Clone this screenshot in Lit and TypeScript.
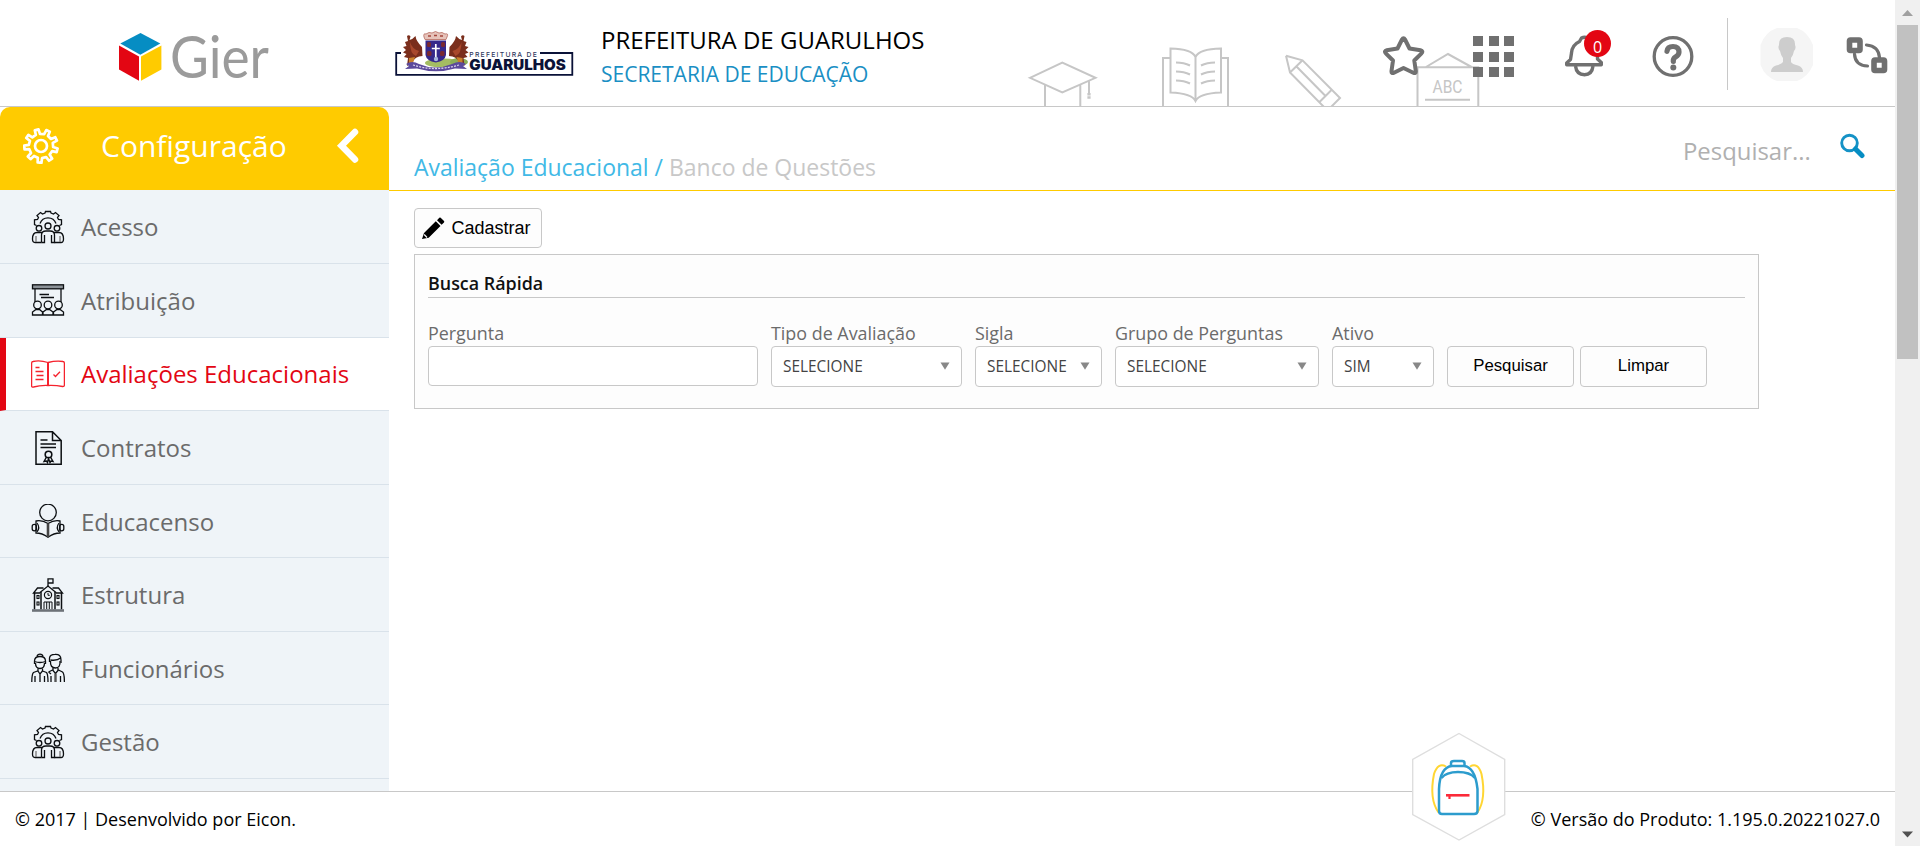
import { LitElement, html, css, svg } from "lit";
import { customElement, property } from "lit/decorators.js";

/* ---------- Menu icons, drawn on a 34px square ---------- */

const team = svg`
  <path d="M5.500 15.500 L3.500 14.500 L3.500 9.800 L6.500 9.500 L7.500 7.500 L6 5.500 L9.500 2.500 L11.500 4 L14 3 L14.500 1.500 H19.500 L20 3 L22.500 4 L24.500 2.500 L28 5.500 L26.500 7.500 L27.500 9.500 L30.500 9.800 V14.500 L28.500 15.500"/>
  <path d="M9 13.500 A8.500 8.500 0 0 1 25 13.500"/>
  <circle cx="17" cy="16" r="3"/><circle cx="8" cy="18.300" r="2.800"/><circle cx="26" cy="18.300" r="2.800"/>
  <path d="M10.500 32.500 H4 Q1.500 32.500 1.500 29 Q1.500 22.500 6 22.500 H11"/>
  <path d="M23.500 32.500 H30 Q32.500 32.500 32.500 29 Q32.500 22.500 28 22.500 H23"/>
  <path d="M10.500 32.500 V25 Q10.500 21 15 21 H19 Q23.500 21 23.500 25 V32.500 H20.500 V25 M10.500 32.500 H13.500 V25"/>
  <path d="M5 26 V32 M29 26 V32" stroke="#777"/>`;

const board = svg`
  <rect x="1.500" y="1.800" width="31" height="4" fill="#8c9298"/>
  <path d="M4 6 V19 M30 6 V19 M8.500 11.500 H18 M10 14.500 H23"/>
  <circle cx="6.500" cy="22" r="3.800"/><circle cx="17" cy="22" r="3.800"/><circle cx="27.500" cy="22" r="3.800"/>
  <path d="M1.500 32 V29 L5 26.500 H8.500 L11.500 29 V32 Z M12 32 V29 L15.500 26.500 H18.500 L22 29 V32 Z M22.500 32 V29 L26 26.500 H29 L32.500 29 V32 Z"/>`;

const bookCheck = svg`
  <path d="M17 5.500 Q9 3 2 4.500 Q.6 4.600 .6 6.500 V29 Q.6 30.300 2.500 30 Q9 28.200 17 28.500 Q25 28.200 31.500 29.500 Q33.400 29.700 33.400 28 V6.500 Q33.400 4.600 32 4.500 Q25 3.500 17 5.500 Z"/>
  <path d="M17 5.500 V28.500" stroke-width="2"/>
  <path d="M4.500 10.500 H8.500 M4.500 14.500 H12.500 M5.500 18.500 H12.500 M4.500 22.500 H12.500"/>
  <path d="M22.500 17.500 L24.500 19.500 L29 14.800"/>`;

const contract = svg`
  <path d="M5 .8 H21.500 L30.200 9.500 V33.200 H5 Z M21.500 .8 V9.500 H30.200" stroke-width="1.500"/>
  <path d="M9.500 9 H16.500 M9.500 13 H25 M9.500 16.500 H25"/>
  <circle cx="17.500" cy="23.500" r="3.300" stroke-width="1.600"/>
  <path d="M15.500 26 L13 30.500 L15.500 30 L16.500 31.500 L17.500 27.500 L19 31.500 L20 30 L22 30.500 L19.500 26" stroke-width="1.400"/>`;

const reader = svg`
  <circle cx="17" cy="8.500" r="8.300"/>
  <path d="M17 19.500 Q11 15.800 5 17 V29 Q11 29 17 33.300 Q23 29 29 29 V17 Q23 15.800 17 19.500 Z"/>
  <path d="M17 19.500 V33" stroke-width="2.600" stroke="#444"/>
  <path d="M6 19 Q9.500 23.500 6 28 M28 19 Q24.500 23.500 28 28" stroke-width="1.200"/>
  <rect x="1.200" y="20.300" width="4.200" height="6.600" rx="2.100"/><rect x="28.600" y="20.300" width="4.200" height="6.600" rx="2.100"/>`;

const school = svg`
  <path d="M17 8 V.8 H22 V5 H17.500" />
  <path d="M9 14.500 L17 8 L25 14.500 M12.500 10 H6.500 L2.500 15 H9 M21.500 10 H27.500 L31.500 15 H25"/>
  <path d="M3.500 15 V31.500 M30.500 15 V31.500 M10 14 V31.500 M24 14 V31.500" stroke-width="1.500"/>
  <circle cx="17" cy="17" r="3.600" stroke-width="1.200"/><path d="M17 15 V17.300 H18.800" stroke-width="1"/>
  <g stroke-width="1.100"><rect x="6" y="17.500" width="2" height="3"/><rect x="6" y="24" width="2" height="3"/>
  <rect x="26" y="17.500" width="2" height="3"/><rect x="26" y="24" width="2" height="3"/></g>
  <path d="M13 31.500 V24 H21 V31.500 M15.700 24 V31 M18.300 24 V31" stroke-width="1"/>
  <path d="M1 32.500 H33" stroke="#6d7278" stroke-width="2.600"/>`;

const couple = svg`
  <path d="M6 5.300 Q6.500 3.200 9 3.200 Q11.500 3.200 12 5.300"/>
  <path d="M3.500 13 V10 Q3.500 5.500 9 5.500 Q14.500 5.500 14.500 10 V13 M3.500 10.500 Q9 12.500 14.500 10.500"/>
  <path d="M4.500 12 Q4.500 17.500 9 17.500 Q13.500 17.500 13.500 12"/>
  <path d="M7 17.500 V20 L9 23 L11.500 20 V17.500 M6.500 20 L2.500 21.500 Q.8 23 .8 31 M11.500 20 L15.500 21.500 Q17 23 17 31 M4 25 V31 M13.500 25 V31 M9 23 V31"/>
  <path d="M18.500 11 V7 Q19 3.400 24 3.400 Q30 3 30 9 V12 M19.500 9 Q26 10 29.500 7"/>
  <path d="M19.500 10 Q19 17 24.500 17 Q29.500 17 29 10"/>
  <path d="M22 17 V19.500 L24.500 22.500 L27 19.500 V17 M21.500 19 L17.500 21 M27.500 19 L31.500 21 Q33.400 22.500 33.400 31 M20 25 V31 M29.500 25 V31 M17.500 21 L20 23"/>
  <path d="M24.500 22.500 V31" stroke-width="2.400" stroke="#555"/>`;

interface MenuEntry {
  label: string;
  icon: unknown;
  active?: boolean;
}

const MENU: MenuEntry[] = [
  { label: "Acesso", icon: team },
  { label: "Atribuição", icon: board },
  { label: "Avaliações Educacionais", icon: bookCheck, active: true },
  { label: "Contratos", icon: contract },
  { label: "Educacenso", icon: reader },
  { label: "Estrutura", icon: school },
  { label: "Funcionários", icon: couple },
  { label: "Gestão", icon: team },
];

/* ---------- Header ---------- */

@customElement("gier-logo")
class GierLogo extends LitElement {
  static styles = css`:host, svg { display: block; } svg { overflow: visible; margin-bottom: -20px; }`;
  render() {
    return html`<svg width="156" height="72" viewBox="0 0 156 72">
      <path d="M21.500 1 L41.300 11.500 L21.300 22.800 L1.300 11.500 Z" fill="#068dc3"/>
      <path d="M0 13.500 L20 24.500 V48.800 L0 37.500 Z" fill="#e30613"/>
      <path d="M22 24.500 L42.400 13.500 V37.500 L22 48.800 Z" fill="#ffcb00"/>
      <text x="51" y="45.800" textLength="99" lengthAdjust="spacingAndGlyphs" font-family="Lato, sans-serif" font-size="57.500" font-weight="400" fill="#9b9b9b">Gier</text>
    </svg>`;
  }
}

@customElement("city-logo")
class CityLogo extends LitElement {
  static styles = css`:host, svg { display: block; }`;
  render() {
    const eagle = svg`
      <path d="M12 6 Q14 4.500 15.500 6.500 L14.500 10 Q18 9 20.500 6 Q21 11 27 17 L27.500 26 Q20 26 17 33 L12 36 L13 28 L9 27 L11.500 24 L8 22.500 L11 20 L8 17 L11.500 16 L10 12 L13 11 Z" fill="#7a2e1c"/>
      <path d="M15 12 Q17 19 24 21 L21 26 Q15 24 15 12 Z" fill="#a8482c"/>
      <path d="M14 28 L20 27 L18 33 L14 34 Z" fill="#c9822c"/>`;
    return html`<svg width="180" height="50" viewBox="0 0 180 50">
      <path d="M6 23 H1.200 V44.800 H177.300 V23 H145" fill="none" stroke="#0a1238" stroke-width="1.800"/>
      <ellipse cx="48" cy="33" rx="18" ry="4.500" fill="#a4bd62"/><ellipse cx="64" cy="32" rx="9" ry="4" fill="#8caf57"/>
      ${eagle}
      <g transform="translate(81.500 0) scale(-1 1)">${eagle}</g>
      <path d="M29 7 Q28 3 31 4 L34 2.500 L37 3 L40.500 1.500 L44 3 L47 2.500 L50 4 Q54 3 52 7 L51 9.500 H30 Z" fill="#e6c3ba" stroke="#b56a5e" stroke-width=".8"/>
      <path d="M33 6 H36 M39 5.500 H42 M45 6 H48" stroke="#a5483e" stroke-width="1.300"/>
      <path d="M30.500 10.500 H51 V25 Q50 31 40.800 32.500 Q31.500 31 30.500 25 Z" fill="#36298a"/>
      <path d="M40.800 14 V27 M36.800 18.500 H44.800" stroke="#fff" stroke-width="1.700"/>
      <g fill="#7a2a30"><rect x="32" y="12" width="4" height="5" rx="1.500"/><rect x="46" y="12" width="4" height="5" rx="1.500"/><rect x="32" y="21" width="4.500" height="5" rx="1.500"/><rect x="45" y="21" width="4.500" height="5" rx="1.500"/></g>
      <circle cx="41" cy="29" r="2.200" fill="#a7b6dd"/>
      <path d="M11 34 Q17 30 24 34 Q40 41 57 34 Q65 30 71 34 L68 36 L72 39 L60 38.500 Q41 44 22 38.500 L10 39 L14 36 Z" fill="#5c4a9c"/>
      <path d="M18 35 Q40 42 64 35" fill="none" stroke="#ddd6ee" stroke-width="1.300" stroke-dasharray="2 1.200"/>
      <text x="74.300" y="27" textLength="67.500" lengthAdjust="spacing" font-family="Inter, sans-serif" font-size="6.800" font-weight="500" fill="#323a5e">PREFEITURA DE</text>
      <text x="74.300" y="39.500" textLength="96.500" lengthAdjust="spacingAndGlyphs" font-family="Inter, sans-serif" font-size="14" font-weight="900" fill="#0a1238">GUARULHOS</text>
    </svg>`;
  }
}

@customElement("school-strip")
class SchoolStrip extends LitElement {
  static styles = css`:host, svg { display: block; }`;
  render() {
    return html`<svg width="460" height="66" viewBox="1025 40 460 66" fill="none" stroke="#c6c6c6" stroke-width="2">
      <path d="M1030 77.800 L1062.300 62.500 L1095.500 77.800 L1062.300 92.500 Z M1045 85 V107 M1080.300 85 V107 M1089 81 V93"/>
      <path d="M1089 93 V99" stroke-width="3.200" stroke-dasharray="2.500 .8"/>
      <path d="M1170 58 H1163 V107 M1221 58 H1228 V107"/>
      <path d="M1195.500 101 Q1192 93.500 1170.500 92.500 V48.500 Q1192 49 1195.500 57 Q1199 49 1221 48.500 V92.500 Q1199 93.500 1195.500 101 Z M1195.500 57 V101"/>
      <path d="M1176 62.500 Q1184 62.500 1190 65.500 M1176 71.500 Q1184 71.500 1190 74.500 M1176 80.500 Q1184 80.500 1190 83.500 M1215 62.500 Q1207 62.500 1201 65.500 M1215 71.500 Q1207 71.500 1201 74.500 M1215 80.500 Q1207 80.500 1201 83.500"/>
      <path d="M1286 55.800 L1302.500 60.300 L1340 98 L1330 108 M1286 55.800 L1290 72.500 L1324 107 M1302.500 60.300 L1290 72.500 M1296.500 66.500 L1325.500 96 M1319 102.500 L1331.500 90"/>
      <path d="M1417.500 107 V67.300 H1478.300 V107 M1426 67 L1448 54 L1471.500 67 M1425 99.700 H1470"/>
      <text x="1432.500" y="92.500" textLength="30" lengthAdjust="spacingAndGlyphs" font-family="Roboto, sans-serif" font-size="18" fill="#c6c6c6" stroke="none">ABC</text>
    </svg>`;
  }
}

@customElement("top-bar")
class TopBar extends LitElement {
  static styles = css`
    :host { display: flex; height: 106px; border-bottom: 1px solid #c8c8c8; position: relative; background: #fff; }
    gier-logo { margin: 32px 0 0 119px; }
    city-logo { margin: 30px 0 0 120px; }
    .names { margin: 23px 0 0 26px; line-height: 34px; font-size: 24px; color: #000; white-space: nowrap; }
    .dept { font-size: 21px; line-height: 35px; color: #1a8fc4; }
    school-strip { position: absolute; left: 1025px; top: 40px; }
    .tools { position: relative; margin-left: auto; display: flex; padding-right: 7px; }
    svg { display: block; }
    .star { margin: 35px 0 0; }
    .apps { margin: 36px 0 0 48px; display: grid; grid-template-columns: repeat(3, 10px); grid-auto-rows: 10px; gap: 5.500px; }
    .apps i { background: #707070; }
    .bell { margin: 35px 0 0 51px; position: relative; }
    .badge { position: absolute; left: 19px; top: -5px; width: 27px; height: 27px; border-radius: 50%; background: #e30613; color: #fff; font-size: 16px; line-height: 34px; text-align: center; }
    .help { margin: 35px 0 0 47px; }
    .rule { margin: 18px 0 0 33px; width: 1px; height: 72px; background: #c8c8c8; }
    .avatar { margin: 28px 0 0 32px; }
    .swap { margin: 36px 0 0 32px; }
  `;
  render() {
    return html`
      <school-strip></school-strip>
      <gier-logo></gier-logo>
      <city-logo></city-logo>
      <div class="names"><div>PREFEITURA DE GUARULHOS</div><div class="dept">SECRETARIA DE EDUCAÇÃO</div></div>
      <div class="tools">
        <svg class="star" width="42" height="42" viewBox="0 0 42 42"><path d="M19 4.500 Q20.500 1.800 22 4.500 L26.500 13.500 L37.500 15.300 Q40.500 16 38.500 18.300 L31.300 25.500 L32.800 36 Q33 39 30.300 37.700 L20.500 33 L11 37.700 Q8.300 39 8.500 36 L10 25.500 L2.800 18.300 Q.8 16 3.800 15.300 L14.500 13.500 Z" fill="#fff" stroke="#707070" stroke-width="4" stroke-linejoin="round"/></svg>
        <div class="apps">${Array.from({ length: 9 }, () => html`<i></i>`)}</div>
        <div class="bell">
          <svg width="40" height="42" viewBox="0 0 40 42" fill="none" stroke="#707070" stroke-width="3.400" stroke-linejoin="round"><path d="M1.700 29.800 H36.300 V27.500 L32.500 24 V17 Q32 9.500 24.500 7 L23 3 Q19.500 1.500 16.500 3 L14.500 6.500 Q7 10 6.500 18 L5.500 24.500 L1.700 28 Z"/><path d="M10.500 31 Q11.500 39.700 19.500 39.700 Q27 39.700 28 31"/></svg>
          <span class="badge">0</span>
        </div>
        <svg class="help" width="42" height="42" viewBox="0 0 42 42"><circle cx="21" cy="21.500" r="18.800" fill="none" stroke="#707070" stroke-width="3.300"/><path d="M15 16.300 Q15.500 11.500 21 11.500 Q27 11.500 27 17 Q27 20 23.500 22 Q21 23.500 21.300 26.500" fill="none" stroke="#707070" stroke-width="5.200" stroke-linecap="round"/><circle cx="21.300" cy="32.500" r="3" fill="#707070"/></svg>
        <div class="rule"></div>
        <svg class="avatar" width="54" height="54" viewBox="0 0 54 54"><path d="M17 0 H37 Q48 4 53 17 V37 Q48 49 37 53 H17 Q5 49 .5 37 V17 Q5 4 17 0 Z" fill="#f5f5f5"/><path d="M27 9 Q35.500 9 35 17 Q36.500 20 34 23 Q33 28 31 30 V34 Q32 36 38 37.500 Q43 39 43 44 H11 Q11 39 16 37.500 Q22 36 23 34 V30 Q21 28 20 23 Q17.500 20 19 17 Q18.500 9 27 9 Z" fill="#cdcdcd"/></svg>
        <svg class="swap" width="42" height="40" viewBox="0 0 42 40" fill="none" stroke="#707070"><rect x="3.500" y="4" width="10.500" height="10.500" rx="1" stroke-width="5.600"/><rect x="28" y="24" width="10.500" height="10.500" rx="1" stroke-width="5.600"/><path d="M8.500 18 Q9 29.500 21.500 30 M20.500 9 Q32.500 10 33.500 21.500" stroke-width="3.200" stroke-linecap="round"/></svg>
      </div>`;
  }
}

/* ---------- Sidebar ---------- */

@customElement("side-menu")
class SideMenu extends LitElement {
  static styles = css`
    :host { display: flex; flex-direction: column; width: 389px; flex: none; background: #eff4f8; overflow: hidden; }
    .corner { background: #fff; flex: none; }
    .title { box-sizing: border-box; height: 83.450px; background: #ffcb00; border-radius: 10px 10px 0 0; display: flex; color: #fff; padding-left: 23px; }
    .title svg { flex: none; margin-top: 21px; }
    .title span { font-size: 30px; line-height: 40px; margin: 19px 0 0 42px; width: 184px; white-space: nowrap; }
    .title .back { margin: 20px 0 0 50px; }
    .item { box-sizing: border-box; flex: none; height: 73.550px; border-bottom: 1px solid #d9e2ea; display: flex; align-items: center; gap: 16px; padding: 0.300px 0 0 31px; font-size: 24px; color: #6b6b6b; white-space: nowrap; }
    .item svg { stroke: #0c0f12; stroke-width: 1.300; fill: none; }
    .active { background: #fff; color: #e30613; border-left: 6px solid #e30613; padding-left: 25px; }
    .active svg { stroke: #f5222d; }
  `;
  render() {
    const teeth = Array.from({ length: 9 }, (_, i) => {
      const at = (r: number, off: number) => {
        const a = ((i * 40 + off - 105) * Math.PI) / 180;
        return `${(18 + r * Math.cos(a)).toFixed(2)} ${(18 + r * Math.sin(a)).toFixed(2)}`;
      };
      return `${i ? "L" : "M"}${at(12.2, -10)} L${at(16.800, -6.500)} L${at(16.800, 6.500)} L${at(12.2, 10)}`;
    }).join(" ") + " Z";
    return html`
      <div class="corner"><div class="title">
        <svg width="36" height="36" viewBox="0 0 36 36" fill="none" stroke="#fff" stroke-width="2.700" stroke-linejoin="round"><path d=${teeth}/><circle cx="18" cy="18" r="6"/></svg>
        <span>Configuração</span>
        <svg class="back" width="26" height="38" viewBox="0 0 26 38"><path d="M20 5 L6.500 18.800 L20 32.500" fill="none" stroke="#fff" stroke-width="6.500" stroke-linecap="round" stroke-linejoin="miter"/></svg>
      </div></div>
      ${MENU.map((m) => html`<div class="item ${m.active ? "active" : ""}"><svg width="34" height="34" viewBox="0 0 34 34">${m.icon}</svg>${m.label}</div>`)}`;
  }
}

/* ---------- Main area ---------- */

@customElement("select-field")
class SelectField extends LitElement {
  @property() label = "";
  @property() value = "";
  static styles = css`
    :host { display: block; }
    .label { font-size: 17.900px; line-height: 22px; color: #6b6b6b; height: 24px; white-space: nowrap; }
    .box { box-sizing: border-box; height: 41px; border: 1px solid #c8c8c8; border-radius: 4px; background: #fff; display: flex; justify-content: space-between; align-items: center; padding: 1px 11px 0 11px; font-size: 15.400px; line-height: 22px; color: #444; }
    svg { display: block; margin-top: -2px; }
  `;
  render() {
    return html`<div class="label">${this.label}</div>
      <div class="box"><span>${this.value}</span><svg width="10" height="8" viewBox="0 0 10 8"><path d="M.5 .5 H9.500 L5 7.800 Z" fill="#888"/></svg></div>`;
  }
}

@customElement("search-page")
class SearchPage extends LitElement {
  static styles = css`
    :host { display: block; flex: 1; background: #fff; }
    .crumbs { box-sizing: border-box; height: 84px; border-bottom: 1px solid #ffcb00; display: flex; padding: 0 30px 0 25px; font-size: 22.980px; white-space: nowrap; }
    .path { line-height: 40px; margin-top: 40px; color: #c8c8c8; }
    .path b { font-weight: 400; color: #41b9e6; }
    .find { margin: 24px 0 0 auto; line-height: 40px; color: #b0b0b0; width: 129px; font-size: 23.900px; }
    .lens { margin: 26px 0 0 28px; }
    .content { padding: 17px 0 0 25px; }
    .btn { box-sizing: border-box; border: 1px solid #c8c8c8; border-radius: 4px; background: #fdfdfd; color: #000; font: 18px "Liberation Sans", Arial, sans-serif; display: flex; align-items: center; justify-content: center; padding: 0; }
    .add { width: 128px; height: 40px; gap: 6px; padding-right: 4px; }
    .panel { box-sizing: border-box; margin-top: 6px; width: 1345px; height: 155px; border: 1px solid #c8c8c8; background: #fdfdfd; padding: 17px 13px 0; }
    .panel h2 { margin: 0; height: 25px; font-size: 17.900px; line-height: 22px; font-weight: 600; color: #111; border-bottom: 1px solid #c8c8c8; }
    .row { display: flex; align-items: flex-start; margin-top: 24px; gap: 13px; }
    .label { font-size: 17.900px; line-height: 22px; height: 24px; color: #6b6b6b; }
    .input { box-sizing: border-box; width: 330px; height: 40px; border: 1px solid #c8c8c8; border-radius: 4px; background: #fff; display: block; }
    .actions { display: flex; gap: 6px; margin-top: 24px; }
    .actions .btn { width: 127px; height: 41px; padding-bottom: 1px; font-size: 16.800px; }
    .w1 { width: 191px; } .w2 { width: 127px; } .w3 { width: 204px; } .w4 { width: 102px; }
  `;
  render() {
    return html`
      <div class="crumbs">
        <div class="path"><b>Avaliação Educacional /</b> Banco de Questões</div>
        <div class="find">Pesquisar...</div>
        <svg class="lens" width="25" height="26" viewBox="0 0 25 26"><circle cx="9.500" cy="10" r="7.800" fill="none" stroke="#1592c6" stroke-width="2.900"/><path d="M15.500 16 L22 22.500" stroke="#068dc3" stroke-width="5" stroke-linecap="round"/></svg>
      </div>
      <div class="content">
        <button class="btn add">
          <svg width="24" height="24" viewBox="0 0 24 24"><path d="M3 17 L14.800 5.200 L19.500 9.900 L7.700 21.700 L1 23 Z M16 4.200 L18.300 1.800 Q19 1.200 19.700 1.800 L23 5.100 Q23.600 5.800 23 6.500 L20.600 8.800 Z" fill="#000"/><path d="M3.200 18.500 L6 21.500" stroke="#fdfdfd" stroke-width="1.200"/></svg>
          Cadastrar
        </button>
        <div class="panel">
          <h2>Busca Rápida</h2>
          <div class="row">
            <div><div class="label">Pergunta</div><span class="input"></span></div>
            <select-field class="w1" label="Tipo de Avaliação" value="SELECIONE"></select-field>
            <select-field class="w2" label="Sigla" value="SELECIONE"></select-field>
            <select-field class="w3" label="Grupo de Perguntas" value="SELECIONE"></select-field>
            <select-field class="w4" label="Ativo" value="SIM"></select-field>
            <div class="actions"><button class="btn">Pesquisar</button><button class="btn">Limpar</button></div>
          </div>
        </div>
      </div>`;
  }
}

/* ---------- Shell ---------- */

@customElement("app-root")
class AppRoot extends LitElement {
  static styles = css`
    :host { display: flex; width: 100vw; height: 100vh; overflow: hidden; background: #fff; font-family: "Open Sans", "Noto Sans", sans-serif; }
    .page { flex: 1; display: flex; flex-direction: column; min-width: 0; }
    .body { flex: 1; display: flex; min-height: 0; }
    footer { box-sizing: border-box; height: 55px; flex: none; border-top: 1px solid #c8c8c8; display: flex; justify-content: space-between; padding: 0 15px; font-size: 18px; line-height: 54px; color: #000; position: relative; }
    .bag { position: absolute; left: 1411px; top: -60px; }
    .scroll { width: 25px; flex: none; background: #f0f0f0; display: flex; flex-direction: column; align-items: center; }
    .scroll svg { display: block; flex: none; }
    .thumb { width: 21px; height: 334px; background: #c1c1c1; margin-bottom: auto; }
  `;
  render() {
    return html`
      <div class="page">
        <top-bar></top-bar>
        <div class="body"><side-menu></side-menu><search-page></search-page></div>
        <footer>
          <span>© 2017 | Desenvolvido por Eicon.</span>
          <span>© Versão do Produto: 1.195.0.20221027.0</span>
          <svg class="bag" width="96" height="110" viewBox="1411 733 96 110" fill="none">
            <path d="M1459 734.500 L1504.700 760.500 V815.500 L1459 841 L1412.700 815.500 V760.500 Z" fill="#fff" stroke="#dedede" stroke-width="1.400"/>
            <g stroke="#ffd633" stroke-width="2"><path d="M1446 767.500 Q1438 763 1434 775 Q1429 800 1438.500 813.500"/><path d="M1470 767.500 Q1478 763 1481.500 775 Q1486.500 800 1477.500 813.500"/></g>
            <g stroke="#2c9ccd" stroke-width="2.500"><path d="M1439 812 V790 Q1440 768 1452 767 H1464 Q1475 768 1477.500 790 V812 Q1477.500 815 1474 815 H1442 Q1439 815 1439 812 Z"/><path d="M1441.500 779 Q1446 773 1458 773 Q1470 773 1475 779"/><path d="M1451 767 V764 Q1451 762 1454 762 H1462 Q1464.500 762 1464.500 764 V767"/></g>
            <path d="M1446 796.300 H1469.500" stroke="#fb2a39" stroke-width="2.600"/><path d="M1449.500 796 V800" stroke="#fb2a39" stroke-width="2.200"/>
          </svg>
        </footer>
      </div>
      <div class="scroll">
        <svg width="25" height="25" viewBox="0 0 25 25"><path d="M7 16 L12.500 10 L18 16 Z" fill="#a0a0a0"/></svg>
        <div class="thumb"></div>
        <svg width="25" height="25" viewBox="0 0 25 25"><path d="M7 10.500 L12.500 16.500 L18 10.500 Z" fill="#505050"/></svg>
      </div>`;
  }
}
